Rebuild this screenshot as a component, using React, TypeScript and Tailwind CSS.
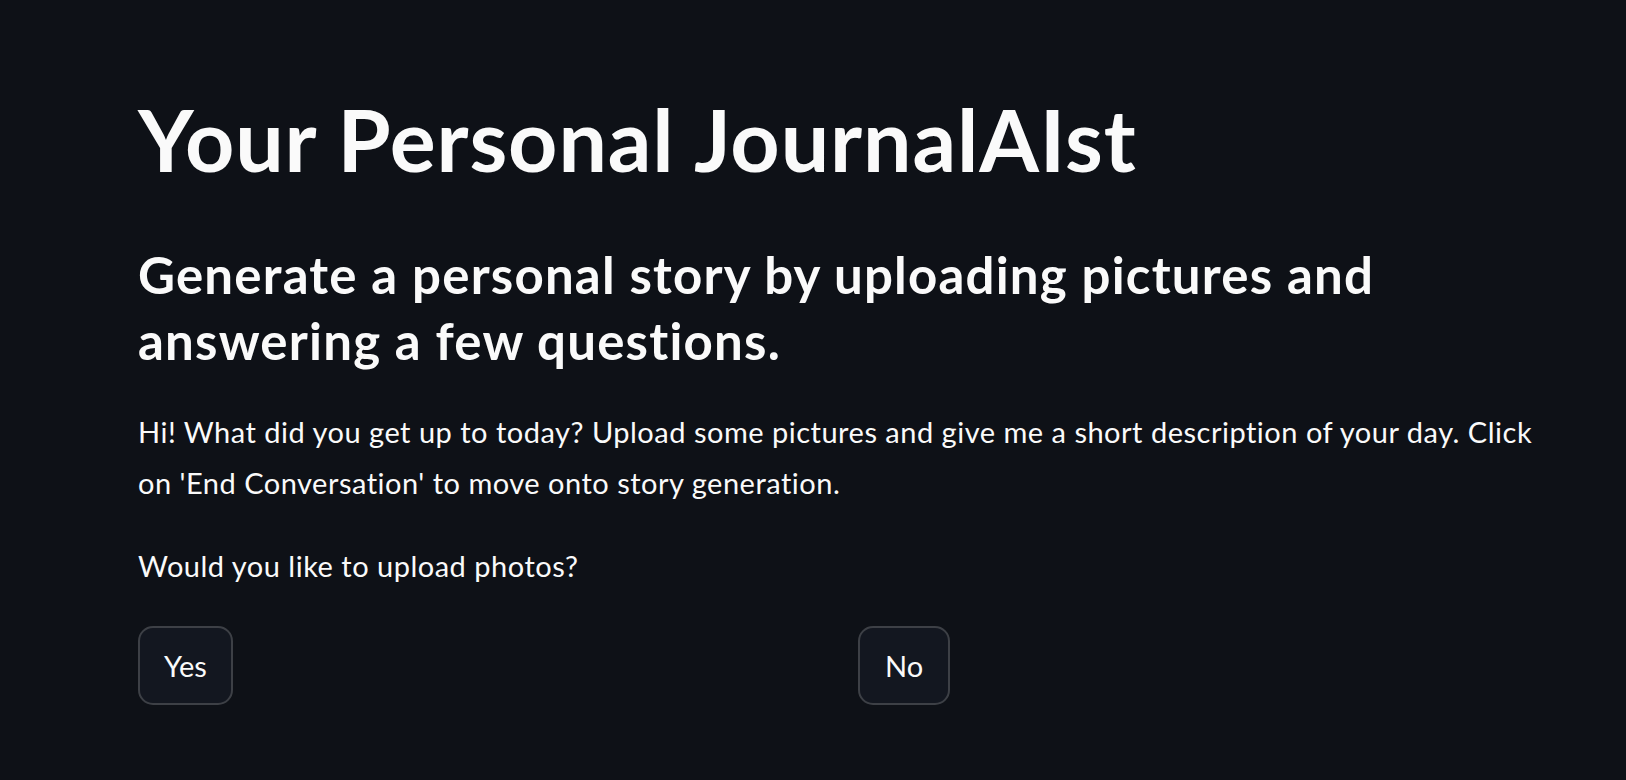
import React from "react";

export default function App() {
  const font = { fontFamily: "Lato, 'Noto Sans', sans-serif" };
  return (
    <div className="min-h-screen w-full bg-[#0e1117] text-[#fafafa]" style={font}>
      <div className="pl-[138px] pt-[87px] w-[1546px]">
        <h1 className="text-[86px] leading-[1.2] font-bold tracking-[0.9px] whitespace-nowrap">Your Personal JournalAIst</h1>
        <h2 className="mt-[52px] text-[51px] leading-[66px] font-bold tracking-[1.2px]">
          Generate a personal story by uploading pictures and
          <br />
          answering a few questions.
        </h2>
        <p className="mt-[32px] text-[29px] leading-[51px] tracking-[0.5px]">
          Hi! What did you get up to today? Upload some pictures and give me a short description of your day. Click on 'End Conversation' to move onto story generation.
        </p>
        <p className="mt-[32px] text-[29px] leading-[51px] tracking-[0.5px]">Would you like to upload photos?</p>
        <div className="mt-[35px] grid grid-cols-2 gap-[32px]">
          <div>
            <button className="h-[79px] px-[24px] rounded-[15px] border-2 border-[#3d4046] bg-[#131720] text-[29px] text-[#fafafa]">
              Yes
            </button>
          </div>
          <div>
            <button className="h-[79px] px-[25px] rounded-[15px] border-2 border-[#3d4046] bg-[#131720] text-[29px] text-[#fafafa]">
              No
            </button>
          </div>
        </div>
      </div>
    </div>
  );
}
